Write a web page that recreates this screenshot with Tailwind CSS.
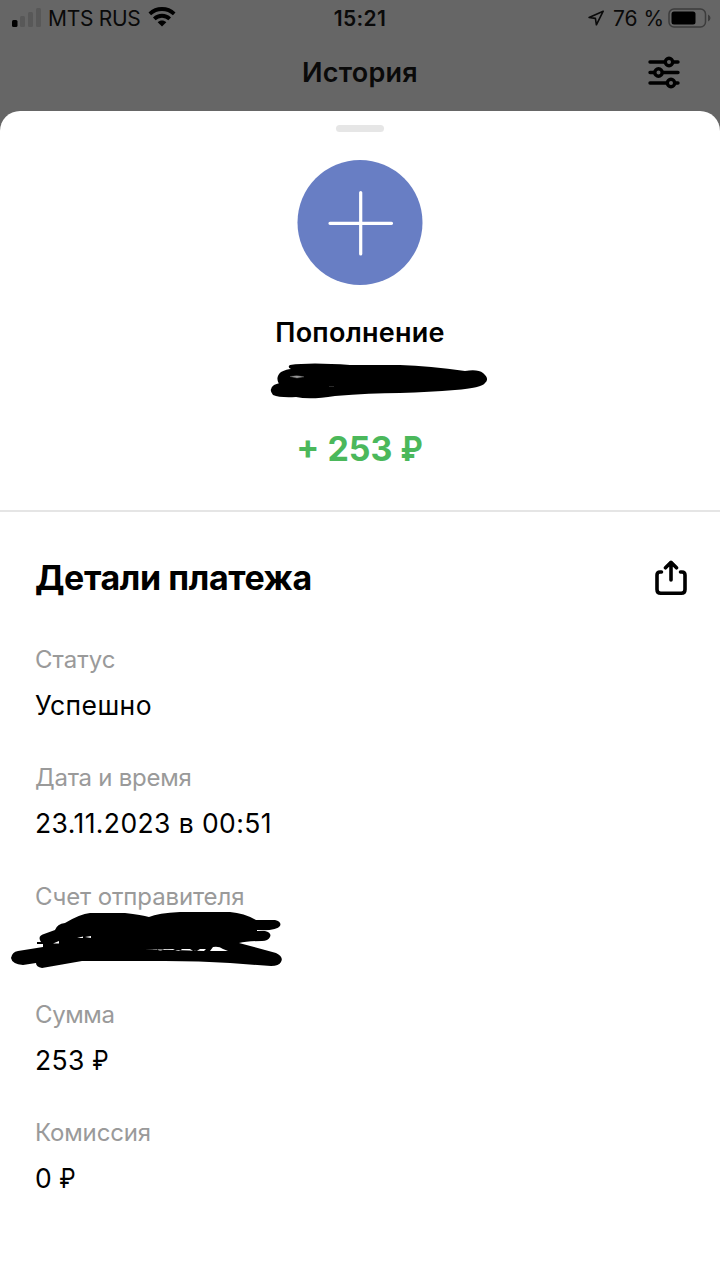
<!DOCTYPE html>
<html lang="ru">
<head>
<meta charset="utf-8">
<title>История</title>
<script src="https://cdn.jsdelivr.net/npm/@tailwindcss/browser@4"></script>
</head>
<body class="w-[720px] h-[1280px] overflow-hidden bg-[#666666] font-['Inter','Liberation_Sans',sans-serif] text-black flex flex-col">
  <div class="h-9 shrink-0 grid grid-cols-3 items-center pl-3 pr-[9px] text-[21px] leading-[34px] text-[#0a0a0a]">
    <div class="flex items-center">
      <svg class="w-[30px] h-5 shrink-0" viewBox="0 0 30 20">
        <rect x="0" y="12" width="5.5" height="7" rx="1.5" fill="#000"/>
        <rect x="8" y="8" width="5" height="11" rx="1.5" fill="#585858"/>
        <rect x="16" y="4" width="5" height="15" rx="1.5" fill="#585858"/>
        <rect x="24" y="0" width="5" height="19" rx="1.5" fill="#585858"/>
      </svg>
      <span class="ml-[6px] pt-[2px] whitespace-nowrap tracking-[-0.3px]">MTS RUS</span>
      <svg class="ml-2 w-[28px] h-[20px] shrink-0 -mt-[2px]" viewBox="0 0 28 20" fill="none" stroke="#000" stroke-width="3.8">
        <path d="M1.800 6.800C8.600.4 19.400.4 26.200 6.800"/>
        <path d="M6.300 11.800C10.600 7.700 17.400 7.700 21.700 11.800"/>
        <path d="M14 19.500L9.700 15.200C12.100 12.900 15.900 12.900 18.300 15.200Z" fill="#000" stroke="none"/>
      </svg>
    </div>
    <div class="text-center font-semibold pt-[2px] -ml-[3px] tracking-[0.4px]">15:21</div>
    <div class="flex items-center justify-end">
      <svg class="w-4 h-4 shrink-0" viewBox="0 0 16 16" fill="none" stroke="#0a0a0a" stroke-width="1.6" stroke-linejoin="round"><path d="M15.200 1.200L1.100 7.500L7.400 8.400L8.400 14.800Z"/></svg>
      <span class="ml-[9px] pt-[2px] whitespace-nowrap">76 %</span>
      <svg class="ml-1 w-[43px] h-5 shrink-0 -mt-[1px]" viewBox="0 0 43 20">
        <rect x="1" y="1" width="36.500" height="18" rx="5" fill="none" stroke="#3c3c3c" stroke-width="1.5"/>
        <rect x="3.500" y="3.500" width="24" height="13" rx="2.500" fill="#000"/>
        <path d="M40 6.500Q42.500 7.500 42.500 10T40 13.500Z" fill="#3c3c3c"/>
      </svg>
    </div>
  </div>
  <div class="h-[75px] shrink-0 grid grid-cols-3 items-start pr-10">
    <span></span>
    <h1 class="text-center text-[27px] leading-[73px] font-semibold text-[#0a0a0a] translate-x-5 tracking-[0.25px]">История</h1>
    <svg class="justify-self-end w-8 h-8 mt-5 overflow-visible" viewBox="0 0 32 32" fill="none" stroke="#000" stroke-width="3.400" stroke-linecap="round">
      <path d="M2 6H17M25 6H30M2 16.500H6M14.500 16.500H30M2 27H19M27 27H30"/>
      <circle cx="21" cy="6" r="3.700"/><circle cx="10.500" cy="16.500" r="3.700"/><circle cx="23" cy="27" r="3.700"/>
    </svg>
  </div>
  <main class="grow bg-white rounded-t-[20px] flex flex-col">
    <section class="h-[401px] shrink-0 border-b-2 border-[#e5e5e5] flex flex-col items-center">
      <div class="mt-[14px] w-12 h-[7px] rounded-full bg-[#e6e6e6]"></div>
      <svg class="mt-7 w-[126px] h-[125px]" viewBox="0 0 126 125"><circle cx="63" cy="62.500" r="62.500" fill="#687ec4"/><path d="M63.700 32.500V94M33 63.300H94.500" stroke="#fff" stroke-width="3.200" stroke-linecap="round"/></svg>
      <h2 class="mt-[30px] text-[27px] leading-[36px] font-semibold tracking-[0.25px]">Пополнение</h2>
      <svg class="mt-[11px] ml-[38px] w-[220px] h-[38px]" viewBox="269 363 220 38">
        <path d="M290 366Q310 363 350 366L400 366Q430 367 465 372Q478 370 483 374Q490 380 485 384Q482 389 455 391Q430 393 400 394Q370 394 335 397Q310 401 296 398Q280 399 273 396Q268 390 274 386Q281 383 279 385Q275 378 281 373Q287 370 291 370Q287 368 290 366Z"/>
        <path d="M290 377.500Q297 376 304 377.800L297 379ZM329 387.500H334" fill="#aaa" stroke="#555" stroke-width=".5"/>
      </svg>
      <div class="mt-[27px] text-[34px] leading-[44px] font-bold text-[#4bb85b]">+ 253 <span class="inline-block scale-x-[.88] -ml-[2px]">₽</span></div>
    </section>
    <section class="px-[35px] flex flex-col">
      <div class="mt-[42px] h-12 flex items-center justify-between">
        <h2 class="text-[34px] leading-[48px] font-bold tracking-[-0.4px]">Детали платежа</h2>
        <svg class="-mr-[3px] w-[34px] h-9" viewBox="0 0 34 36" fill="none" stroke="#000" stroke-width="3.600" stroke-linecap="round" stroke-linejoin="round"><path d="M7.500 12H6Q3 12 3 15V29.500Q3 33.300 6.800 33.300H27.200Q31 33.300 31 29.500V15Q31 12 28 12H26.500M17 20V2.500M11.500 7.800L17 2.300L22.500 7.800"/></svg>
      </div>
      <dl class="mt-[43px] flex flex-col gap-[42.300px] text-[26.500px] leading-8 tracking-[0.4px]">
        <div class="flex flex-col gap-[14px]"><dt class="text-[24px] leading-[30px] text-[#9a9a9a] tracking-normal">Статус</dt><dd>Успешно</dd></div>
        <div class="flex flex-col gap-[14px]"><dt class="text-[24px] leading-[30px] text-[#9a9a9a] tracking-[-0.25px]">Дата и время</dt><dd>23.11.2023 в 00:51</dd></div>
        <div class="flex flex-col h-[76px]"><dt class="text-[24px] leading-[30px] text-[#9a9a9a] tracking-[-0.13px]">Счет отправителя</dt>
          <dd class="-ml-[25px] -mt-px"><svg class="w-[274px] h-[58px]" viewBox="10 911 274 58">
            <path d="M41 942Q37 936 44 934L55 930Q57 924 65 923Q80 914 90 913H125Q142 915 149 917Q158 913 180 912H230Q244 913 256 920L275 920Q282 922 280 926Q277 931 257 930V931H265Q272 933 270 937Q268 941 262 941Q247 941 239 943L276 953Q284 957 281 962Q279 966 271 966L230 963Q200 961 165 961Q115 961 82 961L42 968Q36 967 36 963L23 965Q12 964 11 958Q12 952 18 951L43 947V944H37V942H41Z"/>
            <path d="M77 938L83 936.500V938ZM85 937L91 936V938ZM53 943.500L59 941V943.500ZM145 949H157Q160 952 164 949H173Q179 953 182 949H190Q195 953 200 949H206L204 951ZM210 951L213 947Q219 946 223 949L228 951Z" fill="#fff"/>
          </svg></dd></div>
        <div class="flex flex-col gap-[14px]"><dt class="text-[24px] leading-[30px] text-[#9a9a9a] tracking-[-0.4px]">Сумма</dt><dd>253 <span class="inline-block scale-x-[.88] -ml-[2px]">₽</span></dd></div>
        <div class="flex flex-col gap-[14px]"><dt class="text-[24px] leading-[30px] text-[#9a9a9a] tracking-[-0.15px]">Комиссия</dt><dd>0 <span class="inline-block scale-x-[.88] -ml-[2px]">₽</span></dd></div>
      </dl>
    </section>
  </main>
</body>
</html>
